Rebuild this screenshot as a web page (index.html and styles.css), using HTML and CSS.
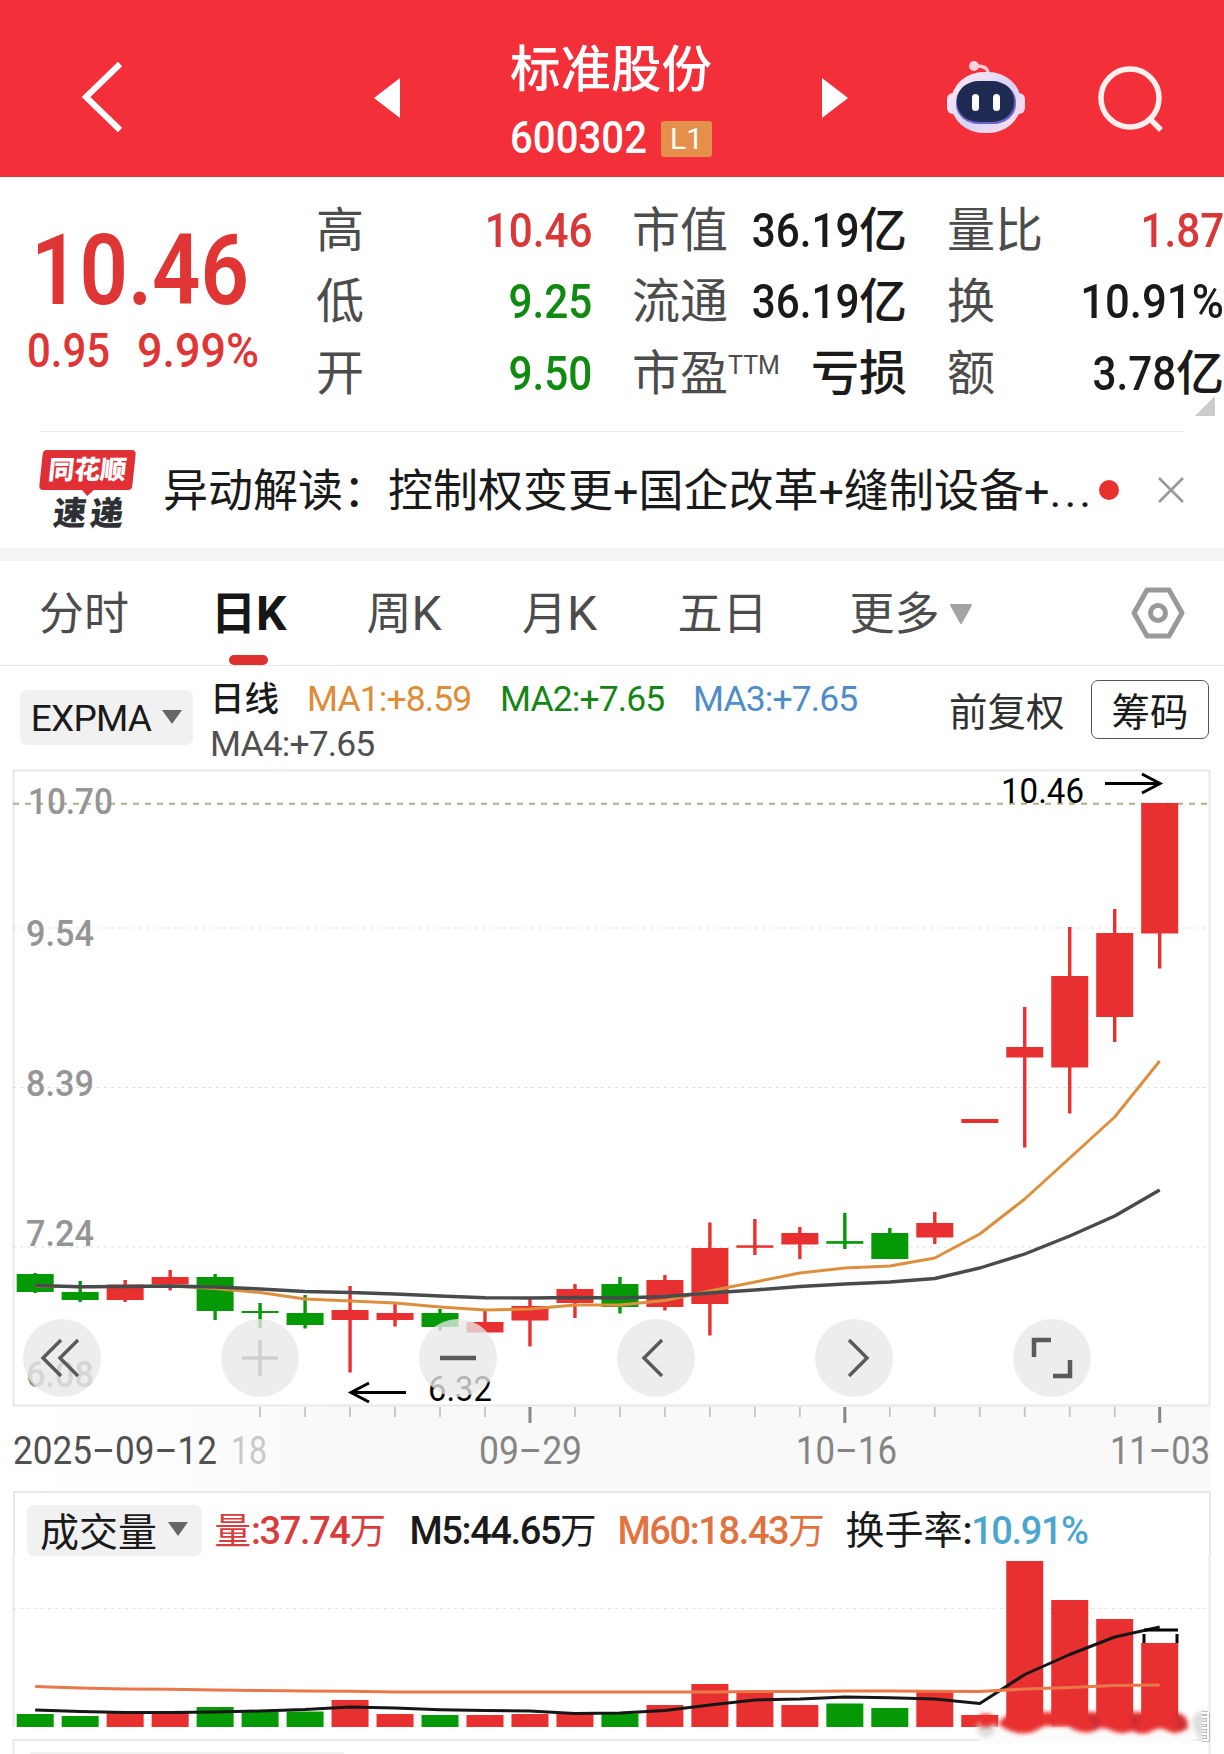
FILE: index.html
```html
<!DOCTYPE html>
<html lang="zh-CN">

<head>
  <meta charset="utf-8">
  <title>标准股份 600302</title>
  <link rel="stylesheet" href="styles.css">
</head>

<body>
  <!-- Header -->
  <header class="header">
    <svg class="back" width="44" height="76" viewBox="0 0 44 76"><path d="M40 5 L6 38 L40 71" /></svg>
    <svg class="prev" width="26" height="40" viewBox="0 0 26 40"><path d="M26 0 V40 L0 20 Z" /></svg>
    <div class="title">
      <h1>标准股份</h1>
      <div class="code-row">
        <svg class="code" width="138" height="44"><text x="0" y="36" textLength="137" lengthAdjust="spacingAndGlyphs">600302</text></svg>
        <span class="badge">L1</span>
      </div>
    </div>
    <svg class="next" width="26" height="40" viewBox="0 0 26 40"><path d="M0 0 V40 L26 20 Z" /></svg>
    <svg class="robot" width="80" height="76" viewBox="0 0 80 76">
      <defs>
        <linearGradient id="shell" x1="0" y1="0" x2="1" y2="1">
          <stop offset="0" stop-color="#ffeaf0" />
          <stop offset=".55" stop-color="#d9d3f8" />
          <stop offset="1" stop-color="#ffe3ee" />
        </linearGradient>
      </defs>
      <path d="M42 16 V13 Q41 7 31 7" fill="none" stroke="#ffc9d2" stroke-width="3.5" />
      <circle cx="28" cy="7" r="5" fill="#ffd3da" />
      <rect x="1" y="34" width="12" height="21" rx="6" fill="#efe4fb" />
      <rect x="67" y="34" width="12" height="21" rx="6" fill="#efd9f6" />
      <rect x="5" y="13" width="70" height="61" rx="33" ry="30" fill="url(#shell)" />
      <rect x="10" y="23" width="60" height="42" rx="23" ry="20" fill="#6a62c8" />
      <rect x="11" y="22" width="57" height="41" rx="22" ry="19" fill="#1f2a52" />
      <rect x="26" y="35" width="7" height="17" rx="3.5" fill="#fff" />
      <rect x="47" y="35" width="7" height="17" rx="3.5" fill="#fff" />
    </svg>
    <svg class="search" width="70" height="70" viewBox="0 0 70 70"><circle cx="33" cy="33" r="29" /><path d="M53 54 L64 65" /></svg>
  </header>

  <!-- Quote -->
  <section class="quote">
    <div class="price">
      <svg width="234" height="190">
        <text class="big" x="5" y="127" textLength="218" lengthAdjust="spacingAndGlyphs">10.46</text>
        <text class="small" x="1" y="190" textLength="83" lengthAdjust="spacingAndGlyphs">0.95</text>
        <text class="small" x="111" y="190" textLength="122" lengthAdjust="spacingAndGlyphs">9.99%</text>
      </svg>
    </div>
    <dl class="stats col1">
      <div><dt>高</dt><dd class="up"><span class="n">10.46</span></dd></div>
      <div><dt>低</dt><dd class="down"><span class="n">9.25</span></dd></div>
      <div><dt>开</dt><dd class="down"><span class="n">9.50</span></dd></div>
    </dl>
    <dl class="stats col2">
      <div><dt>市值</dt><dd><span class="n">36.19</span>亿</dd></div>
      <div><dt>流通</dt><dd><span class="n">36.19</span>亿</dd></div>
      <div><dt>市盈<sup>TTM</sup></dt><dd>亏损</dd></div>
    </dl>
    <dl class="stats col3">
      <div><dt>量比</dt><dd class="up"><span class="n">1.87</span></dd></div>
      <div><dt>换</dt><dd><span class="n wide">10.91%</span></dd></div>
      <div><dt>额</dt><dd><span class="n">3.78</span>亿</dd></div>
    </dl>
    <i class="corner"></i>
  </section>

  <!-- News line -->
  <section class="news">
    <div class="logo">
      <span class="logo-top">同花顺</span>
      <span class="logo-bottom">速递</span>
    </div>
    <p>异动解读：控制权变更+国企改革+缝制设备+<span class="dots">...</span></p>
    <i class="dot"></i>
    <svg class="close" width="26" height="26" viewBox="0 0 26 26"><path d="M1 1 L25 25 M25 1 L1 25" /></svg>
  </section>

  <!-- Period tabs -->
  <nav class="tabs">
    <a>分时</a>
    <a class="active">日<span class="k">K</span></a>
    <a>周<span class="k">K</span></a>
    <a>月<span class="k">K</span></a>
    <a>五日</a>
    <a class="more">更多<svg width="24" height="21" viewBox="0 0 24 21"><path d="M2 1 H22 L12 19 Z" fill="#a3a3a3" stroke="#a3a3a3" stroke-width="2" stroke-linejoin="round" /></svg></a>
    <svg class="setting" width="54" height="52" viewBox="0 0 54 52"><path d="M16 3 H38 L51 26 L38 49 H16 L3 26 Z" /><circle cx="27" cy="26" r="7.5" /></svg>
  </nav>

  <!-- Indicator row -->
  <section class="indicator">
    <button class="chip">EXPMA<i class="caret"></i></button>
    <div class="ma">
      <span class="cn">日线</span><span class="ma1">MA1:+8.59</span><span class="ma2">MA2:+7.65</span><span class="ma3">MA3:+7.65</span>
      <div class="ma4">MA4:+7.65</div>
    </div>
    <span class="adjust">前复权</span>
    <button class="chips-btn">筹码</button>
  </section>

  <!-- Candles, date axis and volume. Drawn by the script below. -->
  <div class="chart">
    <svg id="kline" width="1224" height="721" viewBox="0 770 1224 721"></svg>
    <div class="tools">
      <button><svg viewBox="0 0 78 78"><path d="M38 21 L20 39 L38 57 M55 21 L37 39 L55 57" /></svg></button>
      <button class="off"><svg viewBox="0 0 78 78"><path d="M39 21 V57 M21 39 H57" /></svg></button>
      <button><svg viewBox="0 0 78 78"><path class="thick" d="M21 39 H57" /></svg></button>
      <button><svg viewBox="0 0 78 78"><path d="M45 21 L27 39 L45 57" /></svg></button>
      <button><svg viewBox="0 0 78 78"><path d="M34 21 L52 39 L34 57" /></svg></button>
      <button><svg viewBox="0 0 78 78"><path class="thick" d="M38 21 H21 V38 M57 41 V57 H40" /></svg></button>
    </div>
  </div>

  <section class="volume">
    <div class="vol-head">
      <button class="chip">成交量<i class="caret"></i></button>
      <span class="v1">量<b>:37.74</b>万</span>
      <span class="v2"><b>M5:44.65</b>万</span>
      <span class="v3"><b>M60:18.43</b>万</span>
      <span class="v4">换手率<b>:</b><b class="rate">10.91%</b></span>
    </div>
    <svg id="vol" width="1224" height="198" viewBox="0 1556 1224 198"></svg>
  </section>

  <script>
    const RED = '#e93030';
    const GREEN = '#059905';
    const x = i => 35.2 + i * 44.98;

    // [color, high, body top, body bottom, low, volume top]
    const candles = [
      ['g', 1273, 1274, 1292, 1293, 1714],
      ['g', 1281, 1292, 1300, 1302, 1716],
      ['r', 1280, 1284.5, 1300, 1302, 1713],
      ['r', 1270, 1277, 1284.5, 1290.5, 1713],
      ['g', 1274, 1277, 1311, 1320, 1707],
      ['g', 1303, 1311, 1313, 1328, 1712],
      ['g', 1295, 1313, 1325, 1328.5, 1711.5],
      ['r', 1286, 1310, 1320, 1372.5, 1700],
      ['r', 1304, 1313, 1320, 1326.5, 1714],
      ['g', 1309, 1313, 1327, 1330.5, 1715],
      ['r', 1310.5, 1322, 1332.5, 1332.5, 1715],
      ['r', 1298, 1306, 1320.5, 1346.5, 1714],
      ['r', 1284, 1289, 1303, 1318, 1714],
      ['g', 1277, 1284, 1307, 1313.5, 1713.5],
      ['r', 1275, 1280, 1307, 1310.5, 1705],
      ['r', 1222.5, 1248, 1304, 1335.5, 1684],
      ['r', 1219, 1245.3, 1247.8, 1255, 1691.5],
      ['r', 1227, 1233, 1244.5, 1259, 1705],
      ['g', 1213, 1241.1, 1243.8, 1249, 1703.5],
      ['g', 1228, 1233, 1259, 1259, 1708],
      ['r', 1212, 1223, 1237.5, 1244, 1691.5],
      ['r', 1119, 1119, 1123, 1123, 1715],
      ['r', 1007, 1047, 1057.5, 1147.5, 1561],
      ['r', 927, 976, 1067.5, 1113.5, 1600],
      ['r', 909, 933, 1017, 1042, 1619],
      ['r', 803, 803, 933.5, 968.5, 1643]
    ];
    const ma1 = [1286, 1286.7, 1286.5, 1286, 1288.5, 1292.5, 1299, 1301, 1303, 1307, 1310, 1309, 1305, 1305, 1300.5, 1291, 1282, 1273, 1268, 1266, 1258, 1234, 1199, 1158, 1117, 1061];
    const ma4 = [1285.5, 1286.7, 1286.5, 1286, 1287, 1289, 1291.5, 1292.5, 1294, 1296, 1297.7, 1298, 1297.5, 1298, 1296.5, 1293, 1290, 1286.5, 1284, 1282, 1278.5, 1268, 1254, 1236, 1216, 1190];
    const m5 = [1710, 1711.5, 1712.5, 1712.5, 1712, 1711, 1709.5, 1707, 1708, 1709.7, 1710.5, 1711, 1713.5, 1713, 1710.5, 1705, 1700, 1699, 1697, 1697.7, 1699, 1703.5, 1674.5, 1654.5, 1637, 1627];
    const m60 = [1686.5, 1688, 1689, 1689.3, 1690, 1690.5, 1691, 1691.3, 1692, 1692, 1692, 1692, 1692, 1692, 1692, 1692, 1691.5, 1691.5, 1691, 1691, 1691.3, 1691.5, 1689, 1687.5, 1685.5, 1685];

    function line(values, color, width) {
      const points = values.map((y, i) => `${x(i)},${y}`).join(' ');
      return `<polyline points="${points}" fill="none" stroke="${color}" stroke-width="${width}" stroke-linejoin="round"/>`;
    }

    function hline(y, color, dash, width) {
      return `<path d="M13 ${y} H1209" stroke="${color}" stroke-dasharray="${dash}" stroke-width="${width}"/>`;
    }

    function text(str, left, y, w, cls) {
      return `<text x="${left}" y="${y}" textLength="${w}" lengthAdjust="spacingAndGlyphs" class="${cls}">${str}</text>`;
    }

    // K line
    let k = `<defs><linearGradient id="axis" x1="0" x2="1" y1="0" y2="0">
      <stop offset="0" stop-color="#fff"/><stop offset=".3" stop-color="#f9f9f9"/><stop offset="1" stop-color="#f9f9f9"/></linearGradient></defs>
      <rect x="14" y="1406" width="1196" height="85" fill="url(#axis)"/>
      <rect x="13.5" y="770.5" width="1196" height="635" fill="none" stroke="#e8e8e8" stroke-width="2"/>`;
    k += hline(803.8, '#b5ac84', '6 6', 2);
    [928, 1087.5, 1247].forEach(y => { k += hline(y, '#dedede', '3 4', 1.2); });
    k += text('10.70', 28, 814, 85, 'scale') + text('9.54', 26, 946, 68, 'scale') + text('8.39', 26, 1096, 68, 'scale')
      + text('7.24', 26, 1246, 68, 'scale') + text('6.08', 26, 1387, 68, 'scale');
    candles.forEach((c, i) => {
      const color = c[0] === 'r' ? RED : GREEN;
      k += `<rect x="${x(i) - 18.5}" y="${c[2]}" width="37" height="${c[3] - c[2]}" fill="${color}"/>`;
      k += `<rect x="${x(i) - 1.7}" y="${c[1]}" width="3.4" height="${c[4] - c[1]}" fill="${color}"/>`;
    });
    k += line(ma1, '#de8f3e', 3) + line(ma4, '#484b4d', 3.4);
    k += text('10.46', 1001, 803, 83, 'mark') + text('6.32', 428, 1401, 64, 'mark');
    k += `<path d="M1105 783.5 H1160 M1142 774 L1160 783.5 L1142 793" class="arrow"/>
      <path d="M406 1392.5 H351 M369 1383 L351 1392.5 L369 1402" class="arrow"/>`;
    for (let i = 5; i < 26; i++) {
      const major = i === 11 || i === 18 || i === 25;
      k += `<path d="M${x(i)} 1407 V${major ? 1423 : 1417}" stroke="${major ? '#888' : '#c4c4c4'}" stroke-width="${major ? 3 : 1.8}"/>`;
    }
    k += text('2025–09–12', 13, 1464, 204, 'date first') + text('18', 231, 1464, 36, 'date faint')
      + text('09–29', 479, 1464, 103, 'date') + text('10–16', 796, 1464, 101, 'date') + text('11–03', 1110, 1464, 100, 'date');
    document.getElementById('kline').innerHTML = k;

    // Volume
    let v = hline(1608.5, '#e3e3e3', '3 4', 1.2);
    v += `<path d="M13.5 1556 V1727 M1209.5 1556 V1740" stroke="#e8e8e8" stroke-width="2"/>`;
    candles.forEach((c, i) => {
      v += `<rect x="${x(i) - 18.5}" y="${c[5]}" width="37" height="${1727 - c[5]}" fill="${c[0] === 'r' ? RED : GREEN}"/>`;
    });
    v += line(m5, '#161616', 3) + line(m60, '#e8784a', 3);
    v += `<path d="M1144 1630 H1178" stroke="#000" stroke-width="3"/>
      <path d="M1144 1634 V1643 M1177 1634 V1643" stroke="#000" stroke-width="3"/>
      <rect x="13.5" y="1740" width="1196" height="40" fill="#fff" stroke="#e8e8e8" stroke-width="2"/>
      <rect x="30" y="1752" width="314" height="20" fill="#f1f1f1"/>
      <g class="smudge">
        <rect x="978" y="1727" width="216" height="17" fill="#fbfbfb"/>
        <circle cx="986" cy="1728" r="9" fill="#ddd"/>
        <path d="M1204 1710 Q1190 1714 1193 1726 Q1196 1738 1204 1741 Z" fill="#ddd"/>
        <path d="M980 1714 H990 L996 1720 L990 1727 H980 Z" fill="${RED}"/>
        <path d="M998 1724 Q1008 1708 1040 1712 H1170 Q1189 1712 1188 1728 Q1178 1735 1170 1732 Q1160 1725 1150 1732 Q1142 1736 1132 1731 Q1120 1736 1110 1730 Q1100 1725 1092 1732 Q1078 1734 1068 1726 H1044 Q1022 1742 998 1724 Z" fill="${RED}"/>
        <path d="M1090 1716 Q1102 1722 1093 1729 M1135 1716 V1728 M1176 1716 Q1188 1722 1177 1729" fill="none" stroke="#b82c35" stroke-width="7" opacity=".6"/>
      </g>
      <path d="M1202 1713 H1208 M1202 1717 H1208 M1202 1723 H1208 V1730 M1202 1728 H1208 M1202 1734 H1208 M1202 1740 H1208 V1713" fill="none" stroke="#aaa" stroke-width="3.6"/>
      <path d="M1202 1713 H1208 M1202 1717 H1208 M1202 1723 H1208 V1730 M1202 1728 H1208 M1202 1734 H1208 M1202 1740 H1208 V1713" fill="none" stroke="#fff" stroke-width="2"/>`;
    document.getElementById('vol').innerHTML = v;
  </script>
</body>

</html>
```

FILE: styles.css
```css
* {
  box-sizing: border-box;
}

body,
h1,
p,
dl,
dd {
  margin: 0;
}

body {
  width: 1224px;
  height: 1754px;
  overflow: hidden;
  background-color: #fff;
  color: #1a1a1a;
  font-family: Roboto, "Noto Sans CJK SC", sans-serif;
}

button {
  border: none;
  padding: 0;
  font-family: inherit;
  color: inherit;
}

svg {
  display: block;
  overflow: visible;
}

/* Header */
.header {
  display: flex;
  height: 177px;
  background-color: #f32f39;
  color: #fff;
}

.header > svg {
  flex: none;
}

.back {
  margin: 59px 0 0 80px;
  fill: none;
  stroke: #fff;
  stroke-width: 6;
}

.prev {
  margin: 78px 0 0 250px;
  fill: #fff;
}

.title {
  width: 204px;
  margin-left: 110px;
}

.title h1 {
  margin-top: 40px;
  font-size: 50.5px;
  font-weight: 500;
  line-height: 60px;
  white-space: nowrap;
}

.code-row {
  display: flex;
  align-items: center;
  margin-top: 17px;
}

.code {
  fill: #fff;
  font-size: 45px;
  font-weight: 500;
}

.badge {
  width: 51px;
  height: 36px;
  margin-left: 13px;
  border-radius: 3px;
  background-color: #e5904a;
  font-size: 30px;
  line-height: 36px;
  text-align: center;
}

.next {
  margin: 78px 0 0 108px;
  fill: #fff;
}

.robot {
  margin: 59px 0 0 98px;
}

.search {
  margin: 65px 0 0 71px;
  fill: none;
  stroke: #fff0ee;
  stroke-width: 5.5;
}

/* Quote */
.quote {
  position: relative;
  display: flex;
  height: 254px;
}

.price {
  width: 316px;
  padding-left: 26px;
}

.price text {
  fill: #e03535;
}

.price .big {
  font-size: 98px;
  font-weight: 600;
}

.price .small {
  font-size: 48px;
  font-weight: 500;
}

.stats {
  padding-top: 18px;
  font-size: 48px;
}

.stats div {
  display: flex;
  justify-content: space-between;
  height: 71.3px;
  line-height: 71px;
  white-space: nowrap;
}

.stats dt {
  color: #4c4c4c;
}

.stats dd {
  font-weight: 500;
}

.stats .n {
  display: inline-block;
  transform: scaleX(.88);
  transform-origin: right;
}

.stats .wide {
  transform: scaleX(.91);
}

.stats sup {
  display: inline-block;
  font-size: 25px;
  line-height: 25px;
  vertical-align: 16px;
}

.stats .up {
  color: #d93838;
}

.stats .down {
  color: #108a10;
}

.col1 {
  width: 276px;
}

.col2 {
  width: 275px;
  margin-left: 40px;
}

.col3 {
  width: 277px;
  margin-left: 40px;
}

.corner {
  position: absolute;
  right: 9px;
  bottom: 15px;
  border-left: 20px solid transparent;
  border-bottom: 20px solid #ccc;
}

/* News */
.news {
  display: flex;
  align-items: center;
  height: 117px;
  margin: 0 40px;
  border-top: 1.5px solid #ececec;
}

.logo {
  width: 96px;
  height: 80px;
  text-align: center;
}

.logo-top,
.logo-bottom {
  display: block;
  transform: skewX(-6deg);
  font-weight: 900;
  white-space: nowrap;
}

.logo-top {
  position: relative;
  width: 93px;
  height: 40px;
  margin-left: 1px;
  border-radius: 4px;
  background-color: #e03035;
  color: #fff;
  font-size: 26px;
  line-height: 41px;
}

.logo-top::after {
  content: "";
  position: absolute;
  left: 43px;
  top: 40px;
  border: 6px solid transparent;
  border-top-color: #e03035;
  border-bottom: none;
}

.logo-bottom {
  margin-top: 5px;
  padding-left: 5px;
  color: #2e3134;
  font-size: 33px;
  line-height: 37px;
  letter-spacing: 4px;
}

.news p {
  width: 936px;
  margin: -5px 0 0 27px;
  font-size: 45px;
  white-space: nowrap;
}

.dots {
  letter-spacing: 3px;
}

.dot {
  flex: none;
  width: 20px;
  height: 20px;
  border-radius: 50%;
  background-color: #e83030;
}

.close {
  flex: none;
  margin-left: auto;
  stroke: #999;
  stroke-width: 2.6;
}

/* Tabs */
.tabs {
  display: flex;
  align-items: center;
  height: 118px;
  padding: 0 39px 0 39px;
  border-top: 13px solid #f4f4f4;
  border-bottom: 1.5px solid #e6e6e6;
  color: #4c4c4c;
  font-size: 45px;
}

.tabs a {
  position: relative;
  width: 155.5px;
  padding-top: 3px;
  line-height: 100px;
}

.tabs a:first-child {
  width: 172px;
}

.tabs .active {
  color: #161616;
  font-weight: 700;
}

.tabs .active::after {
  content: "";
  position: absolute;
  left: 18px;
  bottom: 0;
  width: 39px;
  height: 10px;
  border-radius: 5px;
  background-color: #df3030;
}

.tabs a:nth-child(5) {
  width: 172px;
}

.k {
  font-size: 48px;
}

.tabs .more {
  display: flex;
  align-items: center;
}

.more svg {
  margin-left: 9px;
}

.setting {
  margin-left: auto;
  fill: none;
  stroke: #999;
  stroke-width: 5;
  stroke-linejoin: round;
}

/* Indicator */
.indicator {
  display: flex;
  height: 104px;
  padding-left: 20px;
}

.chip {
  display: flex;
  align-items: center;
  justify-content: center;
  border-radius: 7px;
  background-color: #f1f1f1;
}

.caret {
  margin-left: 11px;
  border: 10px solid transparent;
  border-top: 14px solid #666;
  border-bottom: none;
}

.indicator .chip {
  width: 173px;
  height: 55px;
  margin-top: 24px;
  padding-top: 2px;
  font-size: 37px;
  letter-spacing: -.8px;
}

.indicator .caret {
  margin-top: -4px;
}

.ma {
  width: 738px;
  margin-left: 17px;
  padding-top: 11px;
  font-size: 35.5px;
  line-height: 45px;
  letter-spacing: -.9px;
  white-space: nowrap;
}

.ma span {
  display: inline-block;
  width: 193px;
}

.ma .cn {
  width: 97px;
  font-size: 34.5px;
  font-weight: 500;
  letter-spacing: 0;
}

.ma .ma1 {
  color: #e08b35;
}

.ma .ma2 {
  color: #158515;
}

.ma .ma3 {
  color: #4f8dc9;
}

.ma4 {
  color: #505050;
}

.adjust {
  width: 142px;
  margin-left: 1px;
  margin-top: 18px;
  font-size: 38.5px;
  line-height: 58px;
  color: #303030;
}

.chips-btn {
  width: 118px;
  height: 59px;
  margin-top: 14px;
  padding-bottom: 2px;
  border: 1.5px solid #555;
  border-radius: 7px;
  background-color: #fff;
  font-size: 38.5px;
}

/* Chart */
.chart {
  position: relative;
  height: 721px;
  margin-top: -.5px;
}

#kline text {
  font-size: 37px;
}

#kline .scale {
  fill: #959595;
  font-weight: 500;
}

#kline .mark {
  fill: #000;
  font-size: 35px;
}

#kline .date {
  fill: #858585;
  font-size: 38px;
}

#kline .first {
  fill: #505050;
}

#kline .faint {
  fill: #c8c8c8;
}

.arrow {
  fill: none;
  stroke: #000;
  stroke-width: 3;
}

/* Round buttons over the candles */
.tools {
  position: absolute;
  left: 23px;
  top: 549px;
  display: flex;
  gap: 120px;
}

.tools button {
  width: 78px;
  height: 78px;
  border-radius: 50%;
  background-color: rgba(232, 232, 232, .78);
}

.tools path {
  fill: none;
  stroke: #5a5a5a;
  stroke-width: 3.5;
}

.tools .thick {
  stroke-width: 4.5;
}

.tools .off path {
  stroke: #d0d0d0;
}

/* Volume */
.volume {
  height: 263px;
}

.vol-head {
  display: flex;
  height: 65px;
  margin: 0 13.5px 0 12.5px;
  padding: 12px 0 0 12px;
  border: 2px solid #e8e8e8;
  border-bottom: none;
  font-size: 39px;
  line-height: 52px;
  white-space: nowrap;
}

.vol-head .chip {
  width: 175px;
  height: 51px;
  padding-bottom: 3px;
  font-size: 39px;
}

.vol-head b {
  font-weight: 500;
  letter-spacing: -1.4px;
}

.vol-head span {
  font-size: 36.5px;
}

.vol-head b {
  font-size: 38px;
}

.v1 {
  width: 195px;
  margin-left: 13px;
  color: #d93c3c;
}

.v2 {
  width: 208px;
}

.v3 {
  width: 228px;
  color: #e0733f;
}

.vol-head .v4 {
  font-size: 39px;
}

.vol-head .rate {
  color: #4ba6cf;
}

.smudge {
  filter: blur(2px);
}
```
